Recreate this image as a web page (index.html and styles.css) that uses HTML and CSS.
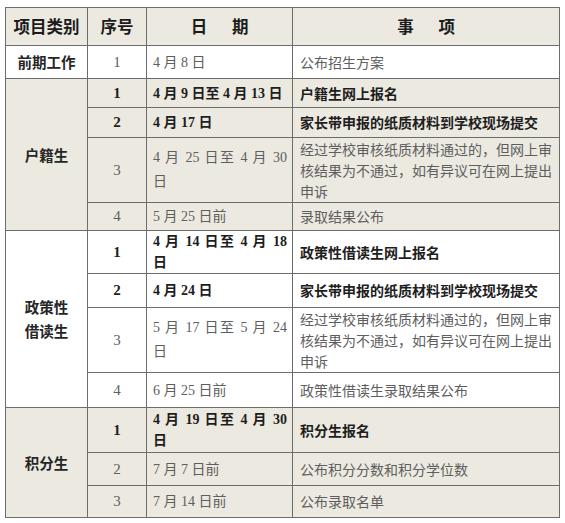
FILE: index.html
```html
<!DOCTYPE html>
<html lang="zh-CN">
<head>
<meta charset="utf-8">
<title>招生日程</title>
<link rel="stylesheet" href="styles.css">
</head>
<body>
<table class="sched">
  <colgroup>
    <col class="c-cat"><col class="c-no"><col class="c-date"><col class="c-item">
  </colgroup>
  <thead>
    <tr class="h38">
      <th>项目类别</th><th>序号</th><th>日&emsp;&ensp;期</th><th>事&emsp;&ensp;项</th>
    </tr>
  </thead>
  <tbody class="white">
    <tr class="h33">
      <td class="cat">前期工作</td><td class="no">1</td><td class="date">4 月 8 日</td><td class="item">公布招生方案</td>
    </tr>
  </tbody>
  <tbody class="beige">
    <tr class="h29 b">
      <td class="cat" rowspan="4">户籍生</td><td class="no">1</td><td class="date nw">4 月 9 日至 4 月 13 日</td><td class="item">户籍生网上报名</td>
    </tr>
    <tr class="h30 b">
      <td class="no">2</td><td class="date">4 月 17 日</td><td class="item">家长带申报的纸质材料到学校现场提交</td>
    </tr>
    <tr class="h65">
      <td class="no">3</td><td class="date wrap wide">4 月 25 日至 4 月 30<br>日</td><td class="item">经过学校审核纸质材料通过的，但网上审核结果为不通过，如有异议可在网上提出申诉</td>
    </tr>
    <tr class="h28">
      <td class="no">4</td><td class="date">5 月 25 日前</td><td class="item">录取结果公布</td>
    </tr>
  </tbody>
  <tbody class="white">
    <tr class="h43 b">
      <td class="cat" rowspan="4">政策性<br>借读生</td><td class="no">1</td><td class="date wrap">4 月 14 日至 4 月 18<br>日</td><td class="item">政策性借读生网上报名</td>
    </tr>
    <tr class="h34 b">
      <td class="no">2</td><td class="date">4 月 24 日</td><td class="item">家长带申报的纸质材料到学校现场提交</td>
    </tr>
    <tr class="h65">
      <td class="no">3</td><td class="date wrap wide">5 月 17 日至 5 月 24<br>日</td><td class="item">经过学校审核纸质材料通过的，但网上审核结果为不通过，如有异议可在网上提出申诉</td>
    </tr>
    <tr class="h35">
      <td class="no">4</td><td class="date">6 月 25 日前</td><td class="item">政策性借读生录取结果公布</td>
    </tr>
  </tbody>
  <tbody class="beige">
    <tr class="h45 b">
      <td class="cat" rowspan="3">积分生</td><td class="no">1</td><td class="date wrap">4 月 19 日至 4 月 30<br>日</td><td class="item">积分生报名</td>
    </tr>
    <tr class="h33">
      <td class="no">2</td><td class="date">7 月 7 日前</td><td class="item">公布积分分数和积分学位数</td>
    </tr>
    <tr class="h32">
      <td class="no">3</td><td class="date">7 月 14 日前</td><td class="item">公布录取名单</td>
    </tr>
  </tbody>
</table>
</body>
</html>
```
FILE: styles.css
```css
html, body {
  margin: 0;
  padding: 0;
  background: #ffffff;
}

body {
  font-family: "Liberation Serif", "Noto Sans CJK SC", serif;
  color: #5e5e5e;
}

.sched {
  margin: 7px 0 0 5px;
  width: 554px;
  table-layout: fixed;
  border-collapse: collapse;
  border: 1px solid #6c6c6c;
}

.c-cat { width: 82px; }
.c-no { width: 59px; }
.c-date { width: 146px; }
.c-item { width: 267px; }

.sched th,
.sched td {
  border: 1px solid #6c6c6c;
  padding: 0;
  vertical-align: middle;
  font-size: 14px;
  line-height: 21px;
}

.sched thead tr {
  background: #ebe9e0;
}

.sched th {
  font-family: "Noto Sans CJK SC", sans-serif;
  font-weight: 700;
  font-size: 16.5px;
  color: #1c1c1c;
  text-align: center;
}

.white { background: #ffffff; }
.beige { background: #ebe9e0; }

.h38 { height: 38px; }
.h35 { height: 35px; }
.h34 { height: 34px; }
.h33 { height: 33px; }
.h32 { height: 32px; }
.h30 { height: 30px; }
.h29 { height: 29px; }
.h28 { height: 28px; }
.h43 { height: 43px; }
.h45 { height: 45px; }
.h65 { height: 65px; }

.sched td.cat {
  font-family: "Noto Sans CJK SC", sans-serif;
  font-weight: 700;
  font-size: 14.5px;
  line-height: 24px;
  color: #262626;
  text-align: center;
}

.sched td.no {
  text-align: center;
  font-size: 15px;
}

.sched td.date {
  padding: 0 5px 0 6px;
}

.sched td.item {
  padding: 0 4px 0 7px;
  font-family: "Noto Sans CJK SC", sans-serif;
  font-weight: 400;
}

.sched td.date.wrap {
  text-align-last: justify;
  text-align: justify;
}

.sched td.date.wide {
  line-height: 24px;
}

.nw { white-space: nowrap; }

.b td.no,
.b td.date,
.b td.item {
  font-weight: 700;
  color: #1e1e1e;
}
```
